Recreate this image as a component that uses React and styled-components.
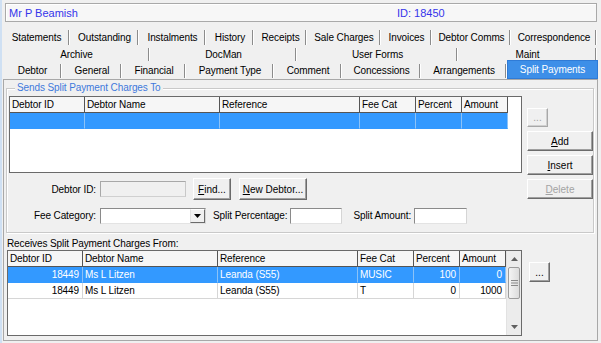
import React from 'react';
import styled, { createGlobalStyle } from 'styled-components';

const Global = createGlobalStyle`
  html, body { margin: 0; padding: 0; background: #f0f0f0; }
  body { font-family: "Liberation Sans", Arial, sans-serif; font-size: 10px; letter-spacing: -0.1px; color: #000; }
  * { box-sizing: border-box; }
`;

const Window = styled.div`
  width: 601px;
  height: 343px;
  border-left: 2px solid #cfe0f3;
  background: #f0f0f0;
  display: flex;
  flex-direction: column;
  overflow: hidden;
`;

const Header = styled.div`
  margin: 3px 4px 0 3px;
  height: 19px;
  border: 1px solid #a9a9a9;
  background: #f7f7f7;
  box-shadow: inset 1px 1px 0 #fff;
  display: grid;
  grid-template-columns: 388px 1fr;
  align-items: center;
  padding-left: 3px;
  font-size: 11px;
  letter-spacing: 0;
  color: #3535ea;
`;

const TabRows = styled.div`
  margin: 6px 0 0 1px;
  width: 595px;
  display: flex;
  flex-direction: column;
`;

const TabRow = styled.div`
  display: flex;
  height: ${p => p.$h}px;
`;

const Tab = styled.div`
  position: relative;
  width: ${p => p.$w}px;
  height: ${p => (p.$sel ? p.$h + 2 : p.$h)}px;
  margin-top: ${p => (p.$sel ? -2 : 0)}px;
  display: flex;
  align-items: center;
  justify-content: center;
  white-space: nowrap;
  background: ${p => (p.$sel ? '#3d8fe8' : 'transparent')};
  color: ${p => (p.$sel ? '#fff' : '#000')};
  border: ${p => (p.$sel ? '1px solid #2f7bd6' : 'none')};
  &::after {
    content: '';
    display: ${p => (p.$sel ? 'none' : 'block')};
    position: absolute;
    right: 1px;
    top: 2px;
    bottom: 1px;
    width: 1px;
    background: #8c8c8c;
    box-shadow: 1px 0 0 #fff;
  }
`;

const Page = styled.div`
  flex: 1;
  margin: 0 3px 2px 1px;
  border: 1px solid #a8a8a8;
  display: flex;
  flex-direction: column;
  padding: 8px 3px 0 2px;
`;

const Group = styled.div`
  position: relative;
  height: 145px;
  border: 1px solid #c9c9c9;
  box-shadow: inset 1px 1px 0 #fff, 1px 1px 0 #fff;
  display: grid;
  grid-template-columns: 513px 66px;
  column-gap: 5px;
  padding: 7px 1px 8px 2px;
`;

const GroupTitle = styled.span`
  position: absolute;
  top: -7px;
  left: 8px;
  padding: 0 2px;
  background: #f0f0f0;
  color: #3f79dc;
  line-height: 12px;
`;

const LeftCol = styled.div`
  display: flex;
  flex-direction: column;
`;

const RightCol = styled.div`
  display: flex;
  flex-direction: column;
  align-items: flex-start;
  gap: 4px;
  padding-top: 12px;
`;

const Btn = styled.button`
  font: inherit;
  font-size: 10px;
  width: ${p => p.$w}px;
  height: ${p => p.$h || 20}px;
  padding: 0;
  margin-left: ${p => p.$ml || 0}px;
  flex-shrink: 0;
  background: #f0f0f0;
  color: ${p => (p.disabled ? '#a3a3a3' : '#000')};
  border: 1px solid;
  border-color: ${p => (p.$soft ? '#fff #a8a8a8 #a8a8a8 #fff' : '#fff #6b6b6b #6b6b6b #fff')};
  box-shadow: inset -1px -1px 0 ${p => (p.$soft ? '#d0d0d0' : '#a0a0a0')};
  white-space: nowrap;
  cursor: default;
  u { text-decoration: underline; }
`;

const GridFrame = styled.div`
  width: ${p => p.$w}px;
  height: ${p => p.$h}px;
  flex-shrink: 0;
  border: 1px solid #6a6a6a;
  background: #fff;
  display: flex;
  overflow: hidden;
`;

const GridBody = styled.div`
  flex: 1;
  display: flex;
  flex-direction: column;
  align-items: flex-start;
`;

const HeadRow = styled.div`
  display: flex;
  height: 16px;
  flex-shrink: 0;
`;

const HeadCell = styled.div`
  width: ${p => p.$w}px;
  border-right: 1px solid #555;
  border-bottom: 1px solid #555;
  background: #f6f6f6;
  padding-left: 2px;
  line-height: 15px;
  white-space: nowrap;
  overflow: hidden;
`;

const Row = styled.div`
  display: flex;
  height: 16px;
  flex-shrink: 0;
  background: ${p => (p.$sel ? '#3399ff' : '#fff')};
  color: ${p => (p.$sel ? '#fff' : '#000')};
`;

const Cell = styled.div`
  width: ${p => p.$w}px;
  border-right: 1px solid ${p => (p.$sel ? '#8cc2f7' : '#d6d6d6')};
  border-bottom: 1px solid ${p => (p.$sel ? '#3399ff' : '#d6d6d6')};
  padding: 0 3px 0 2px;
  text-align: ${p => p.$align || 'left'};
  line-height: 15px;
  white-space: nowrap;
  overflow: hidden;
`;

const ScrollBar = styled.div`
  width: 16px;
  display: flex;
  flex-direction: column;
  background: #ececec;
  border-left: 1px solid #e2e2e2;
`;

const ScrollArrow = styled.div`
  height: 16px;
  display: flex;
  align-items: center;
  justify-content: center;
`;

const ScrollTrack = styled.div`
  flex: 1;
  padding: 0 1px;
`;

const Thumb = styled.div`
  height: 32px;
  border: 1px solid #9c9c9c;
  border-radius: 2px;
  background: linear-gradient(to right, #f4f4f4, #dcdcdc);
  display: flex;
  align-items: center;
  justify-content: center;
`;

const FormRow = styled.div`
  display: flex;
  align-items: center;
  height: ${p => p.$h}px;
  margin-top: ${p => p.$mt}px;
`;

const FieldLabel = styled.span`
  width: 87px;
  margin-right: 4px;
  text-align: right;
  white-space: nowrap;
  flex-shrink: 0;
`;

const InlineLabel = styled.span`
  margin: 0 ${p => p.$mr}px 0 ${p => p.$ml}px;
  white-space: nowrap;
`;

const TextBox = styled.input`
  width: ${p => p.$w}px;
  height: 16px;
  padding: 0 2px;
  font: inherit;
  border: 1px solid;
  border-color: #8a8a8a #d5d5d5 #e3e3e3 #8a8a8a;
  background: ${p => (p.$off ? '#f0f0f0' : '#fff')};
  ${p => (p.$off ? 'border-color: #a8a8a8 #c8c8c8 #d0d0d0 #a8a8a8;' : '')}
  outline: none;
  flex-shrink: 0;
`;

const Combo = styled.div`
  width: 106px;
  height: 16px;
  display: flex;
  border: 1px solid;
  border-color: #8a8a8a #d5d5d5 #e3e3e3 #8a8a8a;
  background: #fff;
  flex-shrink: 0;
`;

const ComboBtn = styled.div`
  margin-left: auto;
  width: 15px;
  height: 100%;
  background: #f0f0f0;
  border: 1px solid;
  border-color: #fff #6b6b6b #6b6b6b #e0e0e0;
  display: flex;
  align-items: center;
  justify-content: center;
`;

const RecvLabel = styled.div`
  margin: 5px 0 0 1px;
  line-height: 12px;
  height: 12px;
`;

const BottomRow = styled.div`
  display: flex;
  align-items: flex-start;
  margin-left: 1px;
  gap: 7px;
`;

const SideBtnWrap = styled.div`
  padding-top: 12px;
`;

const row1 = [
  ['Statements', 67], ['Outstanding', 69], ['Instalments', 67], ['History', 48], ['Receipts', 53],
  ['Sale Charges', 74], ['Invoices', 51], ['Debtor Comms', 79], ['Correspondence', 86],
];
const row2 = [['Archive', 147], ['DocMan', 147], ['User Forms', 161], ['Maint', 139]];
const row3 = [
  ['Debtor', 59], ['General', 60], ['Financial', 64], ['Payment Type', 88], ['Comment', 68],
  ['Concessions', 79], ['Arrangements', 86], ['Split Payments', 91, true],
];

const cols = [
  { label: 'Debtor ID', w: 75, align: 'right' },
  { label: 'Debtor Name', w: 135 },
  { label: 'Reference', w: 140 },
  { label: 'Fee Cat', w: 56 },
  { label: 'Percent', w: 46, align: 'right' },
  { label: 'Amount', w: 46, align: 'right' },
];

const recvRows = [
  ['18449', 'Ms L Litzen', 'Leanda (S55)', 'MUSIC', '100', '0'],
  ['18449', 'Ms L Litzen', 'Leanda (S55)', 'T', '0', '1000'],
];

const Arrow = ({ up, color = '#000' }) => (
  <svg width="7" height="4" viewBox="0 0 7 4">
    <polygon points={up ? '0,4 7,4 3.5,0' : '0,0 7,0 3.5,4'} fill={color} />
  </svg>
);

const Grip = () => (
  <svg width="7" height="6" viewBox="0 0 7 6">
    <rect x="0" y="0" width="7" height="1" fill="#8a8a8a" />
    <rect x="0" y="2.5" width="7" height="1" fill="#8a8a8a" />
    <rect x="0" y="5" width="7" height="1" fill="#8a8a8a" />
  </svg>
);

const TabLine = ({ items, h }) => (
  <TabRow $h={h}>
    {items.map(([t, w, sel]) => (
      <Tab key={t} $w={w} $h={h} $sel={sel}>{t}</Tab>
    ))}
  </TabRow>
);

const Header3 = () => (
  <HeadRow>
    {cols.map(c => (
      <HeadCell key={c.label} $w={c.w}>{c.label}</HeadCell>
    ))}
  </HeadRow>
);

export default function App() {
  return (
    <>
      <Global />
      <Window>
        <Header>
          <span>Mr P Beamish</span>
          <span>ID: 18450</span>
        </Header>
        <TabRows>
          <TabLine items={row1} h={18} />
          <TabLine items={row2} h={16} />
          <TabLine items={row3} h={17} />
        </TabRows>
        <Page>
          <Group>
            <GroupTitle>Sends Split Payment Charges To</GroupTitle>
            <LeftCol>
              <GridFrame $w={513} $h={77}>
                <GridBody>
                  <Header3 />
                  <Row $sel>
                    {cols.map(c => (
                      <Cell key={c.label} $w={c.w} $sel />
                    ))}
                  </Row>
                </GridBody>
              </GridFrame>
              <FormRow $h={22} $mt={5}>
                <FieldLabel>Debtor ID:</FieldLabel>
                <TextBox $w={86} $off readOnly value="" />
                <Btn $w={38} $h={22} $ml={7}><u>F</u>ind...</Btn>
                <Btn $w={68} $h={22} $ml={8}><u>N</u>ew Debtor...</Btn>
              </FormRow>
              <FormRow $h={17} $mt={7}>
                <FieldLabel>Fee Category:</FieldLabel>
                <Combo>
                  <ComboBtn><Arrow /></ComboBtn>
                </Combo>
                <InlineLabel $ml={7} $mr={3}>Split Percentage:</InlineLabel>
                <TextBox $w={52} readOnly value="" />
                <InlineLabel $ml={11} $mr={3}>Split Amount:</InlineLabel>
                <TextBox $w={53} readOnly value="" />
              </FormRow>
            </LeftCol>
            <RightCol>
              <Btn $w={21} $h={19} disabled $soft>...</Btn>
              <Btn $w={66}><u>A</u>dd</Btn>
              <Btn $w={66}><u>I</u>nsert</Btn>
              <Btn $w={66} disabled><u>D</u>elete</Btn>
            </RightCol>
          </Group>
          <RecvLabel>Receives Split Payment Charges From:</RecvLabel>
          <BottomRow>
            <GridFrame $w={515} $h={86}>
              <GridBody>
                <Header3 />
                {recvRows.map((r, i) => (
                  <Row key={i} $sel={i === 0}>
                    {cols.map((c, j) => (
                      <Cell key={c.label} $w={c.w} $align={c.align} $sel={i === 0}>{r[j]}</Cell>
                    ))}
                  </Row>
                ))}
              </GridBody>
              <ScrollBar>
                <ScrollArrow><Arrow up color="#606060" /></ScrollArrow>
                <ScrollTrack>
                  <Thumb><Grip /></Thumb>
                </ScrollTrack>
                <ScrollArrow><Arrow color="#606060" /></ScrollArrow>
              </ScrollBar>
            </GridFrame>
            <SideBtnWrap>
              <Btn $w={21} $h={20}>...</Btn>
            </SideBtnWrap>
          </BottomRow>
        </Page>
      </Window>
    </>
  );
}
